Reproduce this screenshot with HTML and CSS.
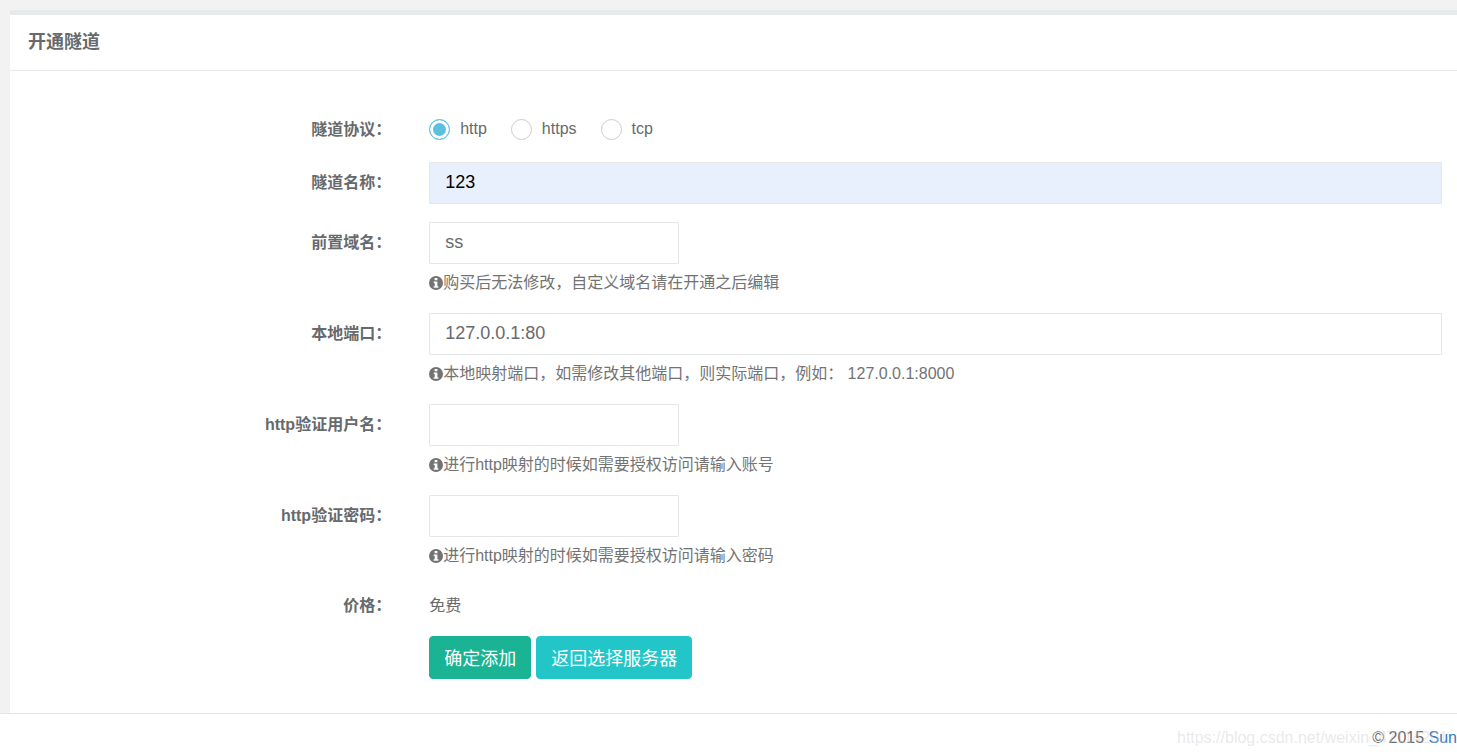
FILE: index.html
```html
<!DOCTYPE html>
<html lang="zh-CN">
<head>
    <meta charset="UTF-8">
    <meta name="viewport" content="width=device-width, initial-scale=1.0">
    <title>开通隧道</title>
    <link rel="stylesheet" href="styles.css">
</head>
<body>
    <!-- info icon, reused by every help line -->
    <svg class="sprite" aria-hidden="true">
        <symbol id="info" viewBox="0 0 14 14">
            <path fill="currentColor" fill-rule="evenodd" d="M7 0a7 7 0 1 1 0 14A7 7 0 0 1 7 0zM5.6 2h2.8v2.2H5.6zM4.7 5.4h3.7v4.8h1v1.6H4.7v-1.6h1V7h-1z"/>
        </symbol>
    </svg>
    <main class="panel">
        <header class="panel-title">
            <h1>开通隧道</h1>
        </header>
        <form class="panel-body">
            <div class="form-group protocols" role="radiogroup" aria-labelledby="protocol">
                <span class="label" id="protocol">隧道协议：</span>
                <div class="field radios">
                    <label class="radio"><input type="radio" name="protocol" value="http" checked>http</label>
                    <label class="radio"><input type="radio" name="protocol" value="https">https</label>
                    <label class="radio"><input type="radio" name="protocol" value="tcp">tcp</label>
                </div>
            </div>
            <div class="form-group">
                <label class="label" for="name">隧道名称：</label>
                <div class="field">
                    <input class="control filled" type="text" id="name" value="123">
                </div>
            </div>
            <div class="form-group">
                <label class="label" for="domain">前置域名：</label>
                <div class="field">
                    <input class="control short" type="text" id="domain" value="ss">
                    <p class="help"><svg><use href="#info"/></svg>购买后无法修改，自定义域名请在开通之后编辑</p>
                </div>
            </div>
            <div class="form-group">
                <label class="label" for="port">本地端口：</label>
                <div class="field">
                    <input class="control" type="text" id="port" value="127.0.0.1:80">
                    <p class="help"><svg><use href="#info"/></svg>本地映射端口，如需修改其他端口，则实际端口，例如： 127.0.0.1:8000</p>
                </div>
            </div>
            <div class="form-group">
                <label class="label" for="user">http验证用户名：</label>
                <div class="field">
                    <input class="control short" type="text" id="user">
                    <p class="help"><svg><use href="#info"/></svg>进行http映射的时候如需要授权访问请输入账号</p>
                </div>
            </div>
            <div class="form-group">
                <label class="label" for="password">http验证密码：</label>
                <div class="field">
                    <input class="control short" type="password" id="password">
                    <p class="help"><svg><use href="#info"/></svg>进行http映射的时候如需要授权访问请输入密码</p>
                </div>
            </div>
            <div class="form-group static">
                <span class="label">价格：</span>
                <div class="field">
                    <p>免费</p>
                </div>
            </div>
            <div class="form-group">
                <div class="field buttons">
                    <button class="btn green" type="submit">确定添加</button>
                    <button class="btn cyan" type="button">返回选择服务器</button>
                </div>
            </div>
        </form>
    </main>
    <footer class="footer">
        <p>© 2015 <a href="#">Sun</a></p>
        <span class="watermark">https://blog.csdn.net/weixin_47114201</span>
    </footer>
</body>
</html>
```
FILE: styles.css
```css
:root{
    --text: #676a6c;
    --help: #737373;
    --line: #e5e6e7;
    --page: #f2f2f2;
    --green: #1ab394;
    --cyan: #23c6c8;
    --blue: #5bc0de;
}
*,*::before,*::after{
    box-sizing: border-box;
    margin: 0;
    padding: 0;
}
body{
    background-color: var(--page);
    color: var(--text);
    font-family: "Liberation Sans", "Noto Sans CJK SC", sans-serif;
    font-size: 16px;
    line-height: 24px;
    min-height: 100vh;
    display: flex;
    flex-direction: column;
}
.sprite{
    position: absolute;
    width: 0;
    height: 0;
}
.panel{
    margin: 10px 0 0 10px;
    background-color: #fff;
    border-top: 5px solid #e7eaec;
}
.panel-title{
    padding: 15px 18px 16px;
    border-bottom: 1px solid #e7eaec;
}
.panel-title h1{
    font-size: 18px;
    line-height: 24px;
}
.panel-body{
    padding: 36px 0 34px;
}
.form-group{
    display: grid;
    grid-template-columns: 28% 1fr;
    margin-bottom: 18px;
}
.form-group:last-child{
    margin-bottom: 0;
}
.label{
    padding: 9px 24px 0 0;
    text-align: right;
    font-weight: 700;
}
.protocols .label{
    padding-top: 11px;
}
.field{
    grid-column: 2;
    padding: 0 15px 0 14px;
}
.static .label,.static .field{
    padding-top: 8px;
}
.radios{
    display: flex;
    gap: 24px;
    padding-top: 10px;
    padding-bottom: 3px;
}
.radio{
    display: flex;
    align-items: center;
    gap: 10px;
}
.radio input{
    appearance: none;
    width: 21px;
    height: 21px;
    border: 1px solid #ccc;
    border-radius: 50%;
    background-color: #fff;
}
.radio input:checked{
    border-color: var(--blue);
    background-color: var(--blue);
    box-shadow: inset 0 0 0 3px #fff;
}
.control{
    display: block;
    width: 100%;
    height: 42px;
    padding: 0 15px 1px;
    border: 1px solid var(--line);
    border-radius: 1px;
    background-color: #fff;
    color: inherit;
    font-family: inherit;
    font-size: 18px;
}
.control:focus{
    outline: none;
    border-color: var(--green);
}
.short{
    width: 250px;
}
.filled{
    background-color: #e8f0fe;
    color: #000;
}
.help{
    display: flex;
    align-items: center;
    margin-top: 7px;
    color: var(--help);
    white-space: pre-wrap;
}
.help svg{
    width: 14px;
    height: 14px;
    flex-shrink: 0;
}
.buttons{
    display: flex;
    gap: 5px;
}
.btn{
    height: 43px;
    padding: 0 14px 2px;
    border: 1px solid;
    border-radius: 4px;
    color: #fff;
    font-family: inherit;
    font-size: 18px;
    cursor: pointer;
}
.green{
    background-color: var(--green);
    border-color: var(--green);
}
.cyan{
    background-color: var(--cyan);
    border-color: var(--cyan);
}
.footer{
    position: relative;
    flex: 1;
    padding-top: 12px;
    border-top: 1px solid var(--line);
    background-color: #fff;
    text-align: right;
}
.footer a{
    color: #337ab7;
    text-decoration: none;
}
/* faint line of text over the footer */
.watermark{
    position: absolute;
    top: 12px;
    right: 9px;
    color: rgba(200, 200, 200, 0.4);
}
```
